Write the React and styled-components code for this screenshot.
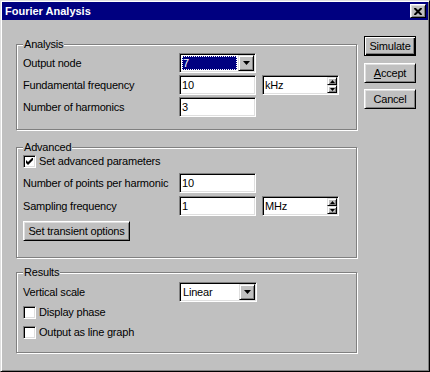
import React from 'react';
import styled, { createGlobalStyle, css } from 'styled-components';

const Global = createGlobalStyle`
  html, body { margin: 0; padding: 0; background: #c0c0c0; }
  body { font-family: "Liberation Sans", Arial, sans-serif; font-size: 11px; color: #000; letter-spacing: -0.2px; }
  * { box-sizing: border-box; }
`;

const raised = css`
  border: 1px solid;
  border-color: #fff #000 #000 #fff;
  box-shadow: inset 1px 1px 0 #dfdfdf, inset -1px -1px 0 #808080;
  background: #c0c0c0;
`;

const raisedSmall = css`
  border: 1px solid;
  border-color: #dfdfdf #000 #000 #dfdfdf;
  box-shadow: inset 1px 1px 0 #fff, inset -1px -1px 0 #808080;
  background: #c0c0c0;
`;

const sunken = css`
  border: 1px solid;
  border-color: #808080 #fff #fff #808080;
  box-shadow: inset 1px 1px 0 #000, inset -1px -1px 0 #dfdfdf;
  background: #fff;
`;

const Window = styled.div`
  width: 430px;
  height: 372px;
  background: #c0c0c0;
  border: 1px solid;
  border-color: #dfdfdf #000 #000 #dfdfdf;
  box-shadow: inset 1px 1px 0 #fff, inset -1px -1px 0 #808080;
  padding: 1px;
  display: flex;
  flex-direction: column;
`;

const TitleBar = styled.div`
  height: 18px;
  flex: none;
  background: #000080;
  color: #fff;
  display: flex;
  align-items: center;
  padding: 0 2px 0 3px;
  font-weight: bold;
  font-size: 11px;
  letter-spacing: 0;
`;

const TitleText = styled.span`
  flex: 1;
`;

const CloseButton = styled.div`
  ${raised};
  width: 16px;
  height: 14px;
  display: flex;
  align-items: center;
  justify-content: center;
`;

const Body = styled.div`
  display: flex;
  padding: 16px 0 0 14px;
`;

const LeftColumn = styled.div`
  width: 341px;
  margin-top: 1px;
  display: flex;
  flex-direction: column;
`;

const ButtonColumn = styled.div`
  margin-left: 7px;
  display: flex;
  flex-direction: column;
`;

const Group = styled.fieldset`
  margin: ${p => p.$mt || 0}px 0 0 0;
  padding: 0 6px;
  border: 1px solid #808080;
  box-shadow: inset 1px 1px 0 #fff, 1px 1px 0 #fff;
  height: ${p => p.$h}px;
  min-width: 0;
`;

const Legend = styled.legend`
  padding: 0 1px;
  margin: 0;
  line-height: 14px;
  font-size: 11px;
  background: #c0c0c0;
`;

const Row = styled.div`
  display: flex;
  align-items: center;
  height: ${p => p.$h || 20}px;
  margin-top: ${p => p.$mt || 0}px;
`;

const Label = styled.span`
  width: 156px;
  flex: none;
  white-space: nowrap;
`;

const Field = styled.div`
  ${sunken};
  width: ${p => p.$w || 77}px;
  height: 20px;
  padding: 0 2px;
  display: flex;
  align-items: center;
  flex: none;
`;

const Combo = styled.div`
  ${sunken};
  width: ${p => p.$w || 77}px;
  height: 20px;
  padding: 1px;
  display: flex;
  flex: none;
`;

const ComboText = styled.div`
  flex: 1;
  margin: 1px;
  padding-left: 1px;
  display: flex;
  align-items: center;
  ${p => p.$selected && css`
    background: #000080;
    color: #fff;
    outline: 1px dotted #fff;
    outline-offset: -1px;
  `}
`;

const DropButton = styled.div`
  ${raisedSmall};
  width: 16px;
  height: 16px;
  flex: none;
  display: flex;
  align-items: center;
  justify-content: center;
`;

const Spin = styled.div`
  ${sunken};
  width: 77px;
  height: 20px;
  padding: 1px;
  margin-left: 6px;
  display: flex;
  flex: none;
`;

const SpinText = styled.div`
  flex: 1;
  display: flex;
  align-items: center;
  padding-left: 1px;
`;

const SpinButtons = styled.div`
  width: 10px;
  display: flex;
  flex-direction: column;
`;

const SpinButton = styled.div`
  ${raisedSmall};
  flex: 1;
  display: flex;
  align-items: center;
  justify-content: center;
`;

const CheckRow = styled.label`
  display: flex;
  align-items: center;
  gap: 3px;
  height: ${p => p.$h || 20}px;
  margin-top: ${p => p.$mt || 0}px;
`;

const CheckBox = styled.span`
  ${sunken};
  width: 13px;
  height: 13px;
  flex: none;
  display: flex;
  align-items: center;
  justify-content: center;
`;

const PushButton = styled.button`
  ${raised};
  font-family: "Liberation Sans", Arial, sans-serif;
  font-size: 11px;
  letter-spacing: -0.2px;
  color: #000;
  width: ${p => p.$w || 52}px;
  height: 20px;
  margin: ${p => p.$mt || 0}px 0 0 0;
  padding: 0;
  display: flex;
  align-items: center;
  justify-content: center;
  ${p => p.$default && css`
    border-color: #000;
    box-shadow: inset 1px 1px 0 #fff, inset -1px -1px 0 #000, inset -2px -2px 0 #808080;
  `}
`;

const DownArrow = () => (
  <svg width="7" height="4" viewBox="0 0 7 4"><polygon points="0,0 7,0 3.5,4" fill="#000" /></svg>
);

const SmallArrow = ({ up }) => (
  <svg width="5" height="3" viewBox="0 0 5 3">
    <polygon points={up ? '2.5,0 5,3 0,3' : '0,0 5,0 2.5,3'} fill="#000" />
  </svg>
);

const CheckMark = () => (
  <svg width="7" height="7" viewBox="0 0 7 7">
    <path d="M0 2 L2 4 L6 0 L7 0 L7 2 L2 7 L0 5 Z" fill="#000" />
  </svg>
);

const CloseGlyph = () => (
  <svg width="8" height="7" viewBox="0 0 8 7">
    <path d="M0.5 0 L7.5 7 M7.5 0 L0.5 7" stroke="#000" strokeWidth="2" />
  </svg>
);

const Select = ({ value, selected, w }) => (
  <Combo $w={w}>
    <ComboText $selected={selected}>{value}</ComboText>
    <DropButton><DownArrow /></DropButton>
  </Combo>
);

const SpinField = ({ value }) => (
  <Spin>
    <SpinText>{value}</SpinText>
    <SpinButtons>
      <SpinButton><SmallArrow up /></SpinButton>
      <SpinButton><SmallArrow /></SpinButton>
    </SpinButtons>
  </Spin>
);

const Check = ({ checked, children, mt, h }) => (
  <CheckRow $mt={mt} $h={h}>
    <CheckBox>{checked && <CheckMark />}</CheckBox>
    <span>{children}</span>
  </CheckRow>
);

export default function App() {
  return (
    <>
      <Global />
      <Window>
        <TitleBar>
          <TitleText>Fourier Analysis</TitleText>
          <CloseButton><CloseGlyph /></CloseButton>
        </TitleBar>
        <Body>
          <LeftColumn>
            <Group $h={93}>
              <Legend>Analysis</Legend>
              <Row $mt={2}>
                <Label>Output node</Label>
                <Select value="7" selected />
              </Row>
              <Row $mt={2}>
                <Label>Fundamental frequency</Label>
                <Field>10</Field>
                <SpinField value="kHz" />
              </Row>
              <Row $mt={2}>
                <Label>Number of harmonics</Label>
                <Field>3</Field>
              </Row>
            </Group>
            <Group $h={118} $mt={10}>
              <Legend>Advanced</Legend>
              <Check checked h={14}>Set advanced parameters</Check>
              <Row $mt={5}>
                <Label>Number of points per harmonic</Label>
                <Field>10</Field>
              </Row>
              <Row $mt={3}>
                <Label>Sampling frequency</Label>
                <Field>1</Field>
                <SpinField value="MHz" />
              </Row>
              <PushButton $w={107} $mt={5}>Set transient options</PushButton>
            </Group>
            <Group $h={88} $mt={7}>
              <Legend>Results</Legend>
              <Row $mt={3}>
                <Label>Vertical scale</Label>
                <Select value="Linear" w={78} />
              </Row>
              <Check>Display phase</Check>
              <Check>Output as line graph</Check>
            </Group>
          </LeftColumn>
          <ButtonColumn>
            <PushButton $default>Simulate</PushButton>
            <PushButton $mt={7}><span><u>A</u>ccept</span></PushButton>
            <PushButton $mt={6}>Cancel</PushButton>
          </ButtonColumn>
        </Body>
      </Window>
    </>
  );
}
